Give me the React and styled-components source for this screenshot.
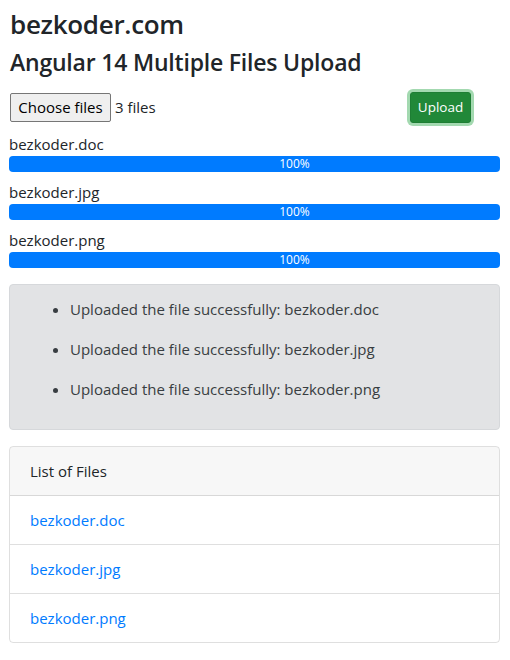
import React from 'react'
import styled, { createGlobalStyle } from 'styled-components'

const GlobalStyle = createGlobalStyle`
    * { box-sizing: border-box; }
    body {
        margin: 0;
        background: #fff;
        color: #212529;
        font-family: "Open Sans", "Noto Sans", "Liberation Sans", sans-serif;
        font-size: 15px;
        line-height: 24px;
    }
`

const Page = styled.div`
    padding: 9px 10px 16px 9px;
`

const Brand = styled.h3`
    margin: 0 0 9px 1px;
    font-size: 26px;
    font-weight: 600;
    line-height: 1.2;
    letter-spacing: -0.3px;
`

const Title = styled.h4`
    margin: 0 0 8px 1px;
    font-size: 23px;
    font-weight: 600;
    line-height: 1.2;
    letter-spacing: -0.2px;
`

const UploadRow = styled.div`
    display: grid;
    grid-template-columns: 401px auto;
    align-items: center;
    height: 45px;
    margin-bottom: 2px;
`

const FilePicker = styled.div`
    display: flex;
    align-items: center;
    gap: 4px;
    padding-left: 1px;
`

const ChooseButton = styled.span`
    display: inline-flex;
    align-items: center;
    justify-content: center;
    width: 101px;
    height: 29px;
    background: #efefef;
    border: 1px solid #767676;
    border-radius: 2px;
    color: #000;
`

const UploadButton = styled.button`
    width: 61px;
    height: 31px;
    padding: 0;
    border: 1px solid #1e7e34;
    border-radius: 3px;
    background: #218838;
    color: #fff;
    font-family: inherit;
    font-size: 13.5px;
    line-height: 1.5;
    box-shadow: 0 0 0 3px rgba(72, 180, 97, 0.5);
`

const FileProgress = styled.div`
    margin-bottom: 8px;
`

const FileLabel = styled.div`
    line-height: 24px;
`

const Progress = styled.div`
    display: flex;
    height: 16px;
    overflow: hidden;
    border-radius: 4px;
    background: #e9ecef;
`

const ProgressBar = styled.div`
    display: flex;
    align-items: center;
    justify-content: center;
    padding-left: 80px;
    background: #007bff;
    color: #fff;
    font-size: 12px;
    line-height: 16px;
`

const Alert = styled.div`
    margin-top: 16px;
    padding: 12px 20px;
    border: 1px solid #d6d8db;
    border-radius: 4px;
    background: #e2e3e5;
    color: #383d41;
`

const MessageList = styled.ul`
    margin: 0;
    padding-left: 40px;
    li {
        line-height: 24px;
        margin-bottom: 16px;
    }
`

const Card = styled.div`
    margin-top: 16px;
    border: 1px solid rgba(0, 0, 0, 0.125);
    border-radius: 4px;
    overflow: hidden;
`

const CardHeader = styled.div`
    padding: 12px 20px;
    background: rgba(0, 0, 0, 0.03);
    border-bottom: 1px solid rgba(0, 0, 0, 0.125);
    line-height: 24px;
`

const ListItem = styled.div`
    padding: 12px 20px;
    line-height: 24px;
    border-bottom: ${p => (p.$last ? 'none' : '1px solid rgba(0, 0, 0, 0.125)')};
    a {
        color: #007bff;
        text-decoration: none;
    }
`

const files = ['bezkoder.doc', 'bezkoder.jpg', 'bezkoder.png']

export default function App() {
    return (
        <>
            <GlobalStyle />
            <Page>
                <Brand>bezkoder.com</Brand>
                <Title>Angular 14 Multiple Files Upload</Title>
                <UploadRow>
                    <FilePicker>
                        <ChooseButton>Choose files</ChooseButton>
                        <span>3 files</span>
                    </FilePicker>
                    <UploadButton>Upload</UploadButton>
                </UploadRow>

                {files.map(name => (
                    <FileProgress key={name}>
                        <FileLabel>{name}</FileLabel>
                        <Progress>
                            <ProgressBar style={{ width: '100%' }}>100%</ProgressBar>
                        </Progress>
                    </FileProgress>
                ))}

                <Alert>
                    <MessageList>
                        {files.map(name => (
                            <li key={name}>Uploaded the file successfully: {name}</li>
                        ))}
                    </MessageList>
                </Alert>

                <Card>
                    <CardHeader>List of Files</CardHeader>
                    {files.map((name, i) => (
                        <ListItem key={name} $last={i === files.length - 1}>
                            <a href="#">{name}</a>
                        </ListItem>
                    ))}
                </Card>
            </Page>
        </>
    )
}
